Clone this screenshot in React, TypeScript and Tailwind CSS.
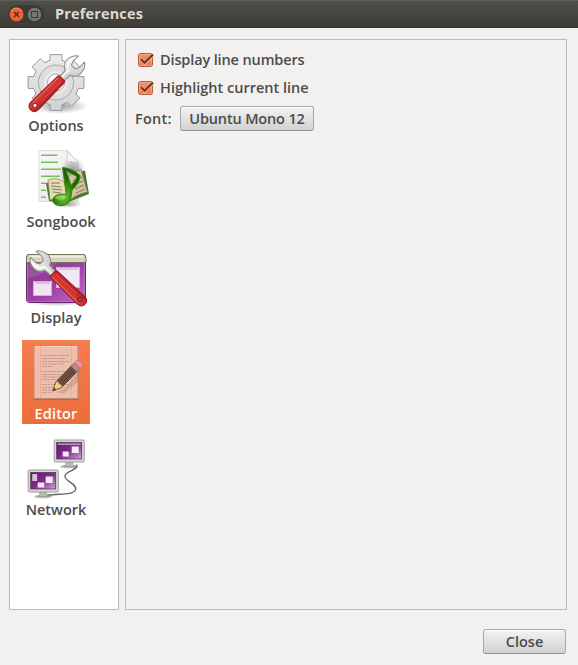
import type { ReactNode } from "react";

function Defs() {
  return (
    <defs>
      <linearGradient id="red" x1="0" y1="0" x2="1" y2="0"><stop offset="0" stopColor="#d8403c" /><stop offset=".5" stopColor="#cf3330" /><stop offset="1" stopColor="#b02023" /></linearGradient>
      <linearGradient id="steel" x1="0" y1="0" x2="1" y2="1"><stop offset="0" stopColor="#fff" /><stop offset="1" stopColor="#bcbdb8" /></linearGradient>
      <linearGradient id="gear" x1="0" y1="0" x2="0" y2="1"><stop offset="0" stopColor="#ececec" /><stop offset="1" stopColor="#d2d2d2" /></linearGradient>
      <radialGradient id="shade"><stop offset="0" stopColor="#000" stopOpacity=".4" /><stop offset="1" stopColor="#000" stopOpacity="0" /></radialGradient>
      <linearGradient id="purple" x1="0" y1="0" x2="1" y2="1"><stop offset="0" stopColor="#7b3a82" /><stop offset=".55" stopColor="#a03fa8" /><stop offset="1" stopColor="#b96fc0" /></linearGradient>
      <linearGradient id="screen" x1="0" y1="0" x2="1" y2="1"><stop offset="0" stopColor="#5e1668" /><stop offset=".5" stopColor="#7f2b8a" /><stop offset="1" stopColor="#d3a3d8" /></linearGradient>
      <linearGradient id="paper" x1="0" y1="0" x2="1" y2="1"><stop offset="0" stopColor="#fafafa" /><stop offset="1" stopColor="#e2e2e2" /></linearGradient>
      <radialGradient id="green" cx=".4" cy=".75"><stop offset="0" stopColor="#7cc641" /><stop offset=".5" stopColor="#3f9812" /><stop offset="1" stopColor="#235f08" /></radialGradient>
    </defs>
  );
}

function Icon({ children }: { children: ReactNode }) {
  return <svg viewBox="0 0 68 64" className="block h-16 w-[68px]"><Defs />{children}</svg>;
}

/* A wrench whose head sits at the origin and whose handle runs straight down. */
function Wrench({ place }: { place: string }) {
  return (
    <g transform={place}>
      <path d="M-3.5 9 L-3.2 18 H3.2 L3.5 9 C8 7 10.5 3 9.5 -2 C9 -6 7 -9 4.3 -10.5 L4.3 -2.5 L2.5 1 H-2.5 L-4.3 -2.5 V-10.5 C-7 -9 -9 -6 -9.5 -2 C-10.5 3 -8 7 -3.5 9Z" fill="url(#steel)" stroke="#888a85" />
      <path d="M-7 -5 C-8 0 -6 5 -1 6.5 V16" fill="none" stroke="#fff" strokeWidth="1.5" opacity=".8" />
      <path d="M-3.8 17 H3.8 Q4.6 17 4.6 19 L5.3 56 Q4.8 61.5 0 61.5 Q-4.8 61.5 -5.3 56 L-4.6 19 Q-4.6 17 -3.8 17Z" fill="url(#red)" stroke="#a01417" />
      <path d="M-3.2 19 L-3.8 54" stroke="#f0766e" strokeWidth="1" opacity=".8" />
      <path d="M1.3 20 L1.7 48" stroke="#ea6660" strokeWidth="1" opacity=".5" />
    </g>
  );
}

const gearPath = Array.from({ length: 8 }, (_, i) => {
  const corner = (radius: number, degrees: number) => {
    const angle = ((i * 45 + degrees) * Math.PI) / 180;
    return `${34 + radius * Math.sin(angle)} ${30.5 - radius * Math.cos(angle)}`;
  };
  return `${i ? "L" : "M"}${corner(23, -15)} L${corner(28.5, -12)} L${corner(28.5, 12)} L${corner(23, 15)}`;
}).join(" ") + "Z";

function OptionsIcon() {
  return (
    <Icon>
      <ellipse cx="37" cy="54" rx="29" ry="8" fill="url(#shade)" />
      <path d={gearPath} fill="url(#gear)" stroke="#999" strokeLinejoin="round" />
      <circle cx="34" cy="30.5" r="17.5" fill="#dedede" stroke="#aaa" />
      <circle cx="34" cy="30.5" r="12" fill="#eee" opacity=".7" />
      <circle cx="34" cy="30.5" r="8.5" fill="#fff" stroke="#aaa" />
      <Wrench place="translate(52 14.5) rotate(45)" />
      <circle cx="13" cy="53.4" r="2" fill="#fff" stroke="#8f1518" strokeWidth=".8" />
    </Icon>
  );
}

function SongbookIcon() {
  return (
    <Icon>
      <path d="M17 2.5 H45 L56.5 15 V53.5 H17Z" fill="url(#paper)" stroke="#dcdcdc" />
      <ellipse cx="51" cy="25" rx="13" ry="17" fill="url(#shade)" />
      <path d="M45 2.5 Q46 11 44.5 14 Q50 12.5 56.5 15Z" fill="#f5f5f5" stroke="#c4c4c4" strokeWidth=".7" />
      <path d="M19 7.3 H35.5 M19 14.3 H36 M19 21.3 H39 M19 28.3 H38 M19 35.2 H24 M19 42.2 H24 M19 49.2 H24" stroke="#74c25a" strokeWidth="1.5" />
      <path d="M24 35 L27 53 L44 55 L67 46 L63 22.5 L61 23 L45 33Z" fill="#427b2c" />
      <path d="M26 32 Q36 28 43 35 L46 54 Q36 49 28 52Z" fill="#e6daB3" stroke="#8d8158" strokeWidth=".7" />
      <path d="M43 35 Q46 25 59 21.5 L65.5 44 Q54 46 46 54Z" fill="#cfc39f" stroke="#82764f" strokeWidth=".7" />
      <path d="M29 35 l9 0 M29 38 l10 1 M30 41 l10 1 M31 44 l8 1 M51 33 l9 -4 M52 37 l9 -4 M53 41 l9 -4 M54 45 l9 -4" stroke="#7c7050" strokeWidth=".9" />
      <ellipse cx="46" cy="56" rx="14" ry="4" fill="url(#shade)" />
      <path d="M40.5 19.5 Q50 20 58 27.5 Q58.5 34 50 42 L48.7 51 Q46.5 57.3 39 57.8 Q30.5 57.5 30.7 51.5 Q32 46 42 46 L44.3 46.5 L40.5 19.5Z M44.2 22.8 L49 37.5 Q54.5 32 55 28.5Z" fill="url(#green)" fillRule="evenodd" stroke="#37850f" strokeWidth="1" />
      <ellipse cx="38.5" cy="49.5" rx="5.5" ry="2" fill="#baf28c" opacity=".5" />
    </Icon>
  );
}

function DisplayIcon() {
  return (
    <Icon>
      <ellipse cx="35" cy="58" rx="32" ry="4" fill="url(#shade)" />
      <rect x="4.5" y="10.5" width="59" height="48" rx="3" fill="url(#purple)" stroke="#632569" />
      <rect x="5.5" y="18.5" width="57" height="39" rx="1" fill="none" stroke="#c181c7" strokeWidth=".8" opacity=".7" />
      <path d="M5 34 Q22 32 35 19 H5Z" fill="#fff" opacity=".12" />
      <path d="M7 10.5 H61 Q64 10.5 64 14 V18.5 H4.5 V14 Q4.5 10.5 7 10.5Z" fill="#d6d4bf" stroke="#77725c" />
      <path d="M7 12.5 H61" stroke="#f2f1e6" strokeWidth="2" />
      <rect x="34.5" y="23.5" width="23" height="20" fill="#f1e8f3" stroke="#d6add9" />
      <path d="M36 25 H56" stroke="#b9a5bb" />
      <rect x="11.5" y="37.5" width="18" height="14" fill="#f1e5f3" stroke="#d6add9" />
      <path d="M13 39 H28" stroke="#b9a5bb" />
      <Wrench place="translate(18.8 17.5) rotate(-46)" />
      <circle cx="58" cy="55.3" r="2.2" fill="#b5386c" stroke="#7d1020" />
    </Icon>
  );
}

function EditorIcon() {
  return (
    <Icon>
      <path d="M11 58 H57 V60 H11Z" fill="#98401f" opacity=".35" />
      <rect x="12" y="5.5" width="44" height="53" fill="#edbeae" stroke="#bf8971" />
      <path d="M13 6.5 H55" stroke="#f3d1c5" />
      <path d="M18.5 6 V58" stroke="#f3a18d" strokeWidth=".8" />
      <path d="M49.5 6 V58" stroke="#dfa9b0" strokeWidth=".7" />
      <path d="M20 15.5 H47 M20 18.5 H44 M20 21.5 H48 M20 24 H42 M20 26.5 H31 M20 31.5 H45 M20 34.5 H41 M20 37 H44 M20 39.5 H39 M20 44.5 H46 M20 47.5 H37 M20 50 H34 M20 52.8 H30" stroke="#c99a88" strokeWidth="1.1" strokeDasharray="5 .6 3 .5" />
      <path d="M34 52 Q45 50 57 29 L56 42 Q47 49 42 54Z" fill="#84503e" opacity=".22" />
      <g transform="translate(31 50.7) rotate(44)">
        <path d="M0 0 L-4 -8 V-31 H4 V-8Z" fill="#715044" stroke="#4b332c" strokeWidth=".8" />
        <path d="M-1.3 -9 V-30 M1.3 -9 V-30" stroke="#4f382f" strokeWidth=".8" />
        <path d="M0 0 L-4 -9 Q-2 -11 0 -9 Q2 -11 4 -9Z" fill="#f0cf82" stroke="#a8733a" strokeWidth=".5" />
        <path d="M0 1 L-1.5 -3 H1.5Z" fill="#4d302b" />
        <rect x="-4" y="-35" width="8" height="5" fill="#b88d82" stroke="#806055" strokeWidth=".6" />
        <path d="M-4 -35 V-38 Q-4 -40 0 -40 Q4 -40 4 -38 V-35Z" fill="#eb929b" stroke="#cf6575" strokeWidth=".7" />
      </g>
    </Icon>
  );
}

function Monitor({ place, children }: { place: string; children: ReactNode }) {
  return (
    <g transform={place}>
      <ellipse cx="15.5" cy="27" rx="9" ry="1.8" fill="#777" opacity=".5" />
      <path d="M12 22 H19 V25 L21 27 H10 L12 25Z" fill="#b9bab6" stroke="#888a85" strokeWidth=".6" />
      <rect x=".5" y=".5" width="30" height="22" rx="1" fill="#d8d9d5" stroke="#9b9c98" />
      <rect x="3" y="3" width="25" height="16.5" fill="url(#screen)" stroke="#562461" strokeWidth=".7" />
      {children}
    </g>
  );
}

function NetworkIcon() {
  return (
    <Icon>
      <path d="M54.5 28.5 C57 34 43 35 43 40 C42 45 56 48 53.5 54 C50 60 36 57 25 59.5" fill="none" stroke="#666763" strokeWidth="1.4" />
      <Monitor place="translate(31.7 3.5)">
        <path d="M4 4.7 H27" stroke="#b294b8" strokeWidth="1.7" />
        <path d="M9 12 h6 v5 h-6Z M18 7 h7 v6.5 h-7Z" fill="#f7e9f8" />
      </Monitor>
      <Monitor place="translate(5.7 33.5)">
        <path d="M4.5 4.5 h5 v7 h-5Z" fill="#d5bfd9" />
        <path d="M10 13 h6.5 v5 h-6.5Z M18 7 h7 v6.5 h-7Z" fill="#f7e9f8" />
      </Monitor>
    </Icon>
  );
}

const items = [
  { label: "Options", icon: <OptionsIcon />, tracking: "" },
  { label: "Songbook", icon: <SongbookIcon />, tracking: "ml-[10px]" },
  { label: "Display", icon: <DisplayIcon />, tracking: "" },
  { label: "Editor", icon: <EditorIcon />, tracking: "tracking-[0.15px]", selected: true },
  { label: "Network", icon: <NetworkIcon />, tracking: "" },
];

function CheckRow({ label, tracking }: { label: string; tracking: string }) {
  return (
    <label className="flex h-7 items-center">
      <svg viewBox="0 0 19 18" className="mr-[5px] h-[18px] w-[19px]">
        <defs><linearGradient id="check" x2="0" y2="1"><stop stopColor="#f59470" /><stop offset="1" stopColor="#ef7548" /></linearGradient></defs>
        <rect x="2.5" y="2.5" width="14" height="13" rx="2" fill="url(#check)" stroke="#b45c3c" />
        <rect x="3.5" y="3.5" width="12" height="11" rx="1" fill="none" stroke="#f8b193" strokeOpacity=".7" />
        <path d="M5 8.5 L8.5 12 L17 4" fill="none" stroke="#f9ad8e" strokeWidth="3.6" />
        <path d="M5 8.3 L8.5 11.8 L17 3.5" fill="none" stroke="#673825" strokeWidth="2" />
      </svg>
      <span className={tracking}>{label}</span>
    </label>
  );
}

const button = "flex items-center justify-center rounded-[3px] border border-[#a8a8a5] border-b-[#92928f] bg-linear-to-b from-[#f2f2f2] to-[#d2d2d2] shadow-[inset_0_1px_0_#fff]";

export default function App() {
  return (
    <main className="flex h-[665px] w-[578px] flex-col bg-[#f2f1f0] font-['Open_Sans','Noto_Sans',sans-serif] text-[14.5px] leading-5 font-semibold whitespace-nowrap text-[#4c4c4c]">
      <header className="flex h-7 items-center border-t border-b border-t-[#625f59] border-b-[#33322e] bg-linear-to-b from-[#504e48] to-[#3d3c37] pl-2">
        <svg viewBox="0 0 36 20" className="mr-[11px] h-5 w-9">
          <rect width="36" height="18" y="1" rx="9" fill="#3b3a36" />
          <circle cx="8.5" cy="10.5" r="7.2" fill="#ed6338" stroke="#81351e" />
          <path d="M3 7 Q8 1 14 7" fill="none" stroke="#f58c67" />
          <path d="M6 8 l5 5 M11 8 l-5 5" stroke="#51271b" strokeWidth="1.4" />
          <circle cx="26.5" cy="10.5" r="7.2" fill="#77756f" stroke="#383733" />
          <rect x="23.5" y="7.5" width="6" height="6" fill="none" stroke="#3b3a36" />
        </svg>
        <h1 className="text-[14.5px] font-bold tracking-[0.15px] text-[#dfdbd2]">Preferences</h1>
      </header>
      <section className="mt-[11px] flex h-[571px] gap-1.5 pl-[9px]">
        <nav className="flex w-[110px] flex-col gap-3 border border-[#bdbcb9] bg-white pt-3 pl-3">
          {items.map((item) => (
            <div key={item.label} className={`flex h-[84px] w-[68px] flex-col items-center ${item.selected ? "bg-linear-to-b from-[#f47e4c] to-[#ec6d3c] text-white" : ""}`}>
              {item.icon}
              <span className={`mt-px flex h-[18px] items-center border border-dotted px-px ${item.selected ? "w-[51px] justify-center border-[#a77c67]" : "border-transparent"} ${item.tracking}`}>{item.label}</span>
            </div>
          ))}
        </nav>
        <div className="w-[442px] border border-[#bdbcb9] pt-1.5 pl-[9px]">
          <div className="pl-px">
            <CheckRow label="Display line numbers" tracking="tracking-[-0.13px]" />
            <CheckRow label="Highlight current line" tracking="tracking-[0px]" />
          </div>
          <div className="mt-1 flex items-center">
            <span className="w-[45px] tracking-[0.25px]">Font:</span>
            <button className={`${button} h-[25px] w-[134px] tracking-[-0.15px]`}>Ubuntu Mono 12</button>
          </div>
        </div>
      </section>
      <footer className="mt-[19px] flex justify-end pr-3">
        <button className={`${button} h-[25px] w-[83px]`}>Close</button>
      </footer>
    </main>
  );
}
